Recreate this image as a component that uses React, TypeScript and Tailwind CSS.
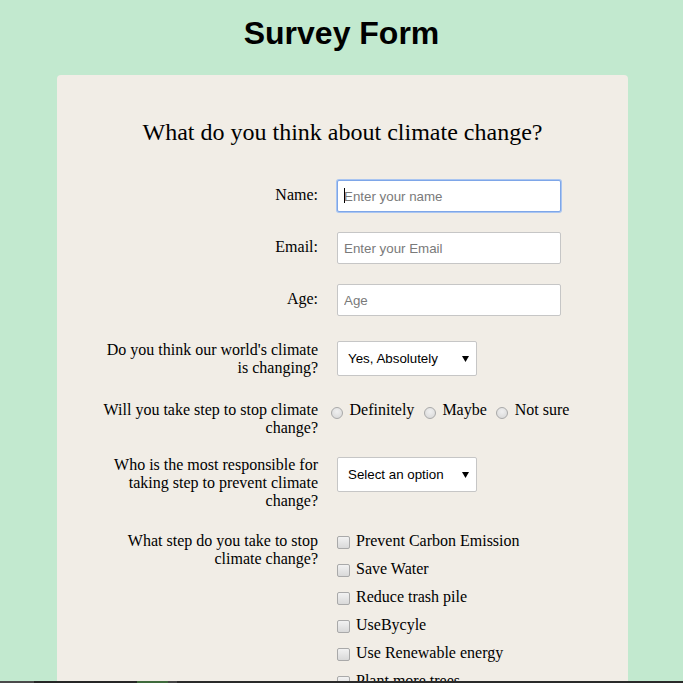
import React from "react";

const serif = { fontFamily: '"Liberation Serif", "Times New Roman", serif' };
const sans = { fontFamily: '"Liberation Sans", Arial, sans-serif' };

function Label({ children, className = "" }: { children: React.ReactNode; className?: string }) {
  return (
    <div className={"w-[220px] shrink-0 text-right text-[16px] leading-[18px] text-black " + className} style={serif}>
      {children}
    </div>
  );
}

function TextInput({ placeholder, focused }: { placeholder: string; focused?: boolean }) {
  return (
    <div className="relative ml-[19px]">
      <input
        type="text"
        placeholder={placeholder}
        style={sans}
        className={
          "block h-[32px] w-[224px] rounded-[2px] bg-white px-[6px] text-[13.33px] text-black outline-none placeholder:text-[#7a7a7a] " +
          (focused
            ? "border border-[#7ea6e8] shadow-[0_0_0_1px_#a9c5f1]"
            : "border border-[#c6c6c6]")
        }
      />
      {focused && <span className="pointer-events-none absolute left-[7px] top-[8px] h-[15px] w-px bg-black" />}
    </div>
  );
}

function FakeSelect({ value }: { value: string }) {
  return (
    <div
      className="ml-[19px] flex h-[35px] w-[140px] items-center justify-between rounded-[2px] border border-[#c6c6c6] bg-white pl-[10px] pr-[7px] text-[13.33px] text-black"
      style={sans}
    >
      <span>{value}</span>
      <svg width="7" height="6" viewBox="0 0 7 6">
        <path d="M0 0 H7 L3.5 6 Z" fill="#000" />
      </svg>
    </div>
  );
}

function Radio({ label }: { label: string }) {
  return (
    <div className="flex items-start gap-[6.5px]">
      <span className="mt-[6px] block h-[12px] w-[12px] rounded-full border border-[#a9a9a9] bg-[radial-gradient(circle_at_50%_35%,#f0f0f0,#d6d6d6)]" />
      <span className="text-[16px] leading-[18px]" style={serif}>{label}</span>
    </div>
  );
}

function Check({ label }: { label: string }) {
  return (
    <div className="flex items-start gap-[6px]">
      <span className="mt-[4px] block h-[13px] w-[13px] rounded-[2px] border border-[#a9a9a9] bg-[linear-gradient(#f2f2f2,#d9d9d9)]" />
      <span className="text-[16px] leading-[18px]" style={serif}>{label}</span>
    </div>
  );
}

export default function App() {
  return (
    <div className="min-h-screen bg-[#c2e9cf] pb-[40px]">
      <h1 className="pt-[15px] text-center text-[32px] font-bold leading-[37px] text-black" style={sans}>
        Survey Form
      </h1>
      <div className="ml-[57px] mt-[23px] w-[571px] rounded-[4px] bg-[#f1ede6] pt-[43px] pb-[60px]">
        <h2 className="text-center text-[24px] leading-[28px] text-black" style={serif}>
          What do you think about climate change?
        </h2>
        <form className="flex flex-col pl-[41px]">
          <div className="mt-[34px] flex items-start">
            <Label className="pt-[6px]">Name:</Label>
            <TextInput placeholder="Enter your name" focused />
          </div>
          <div className="mt-[20px] flex items-start">
            <Label className="pt-[6px]">Email:</Label>
            <TextInput placeholder="Enter your Email" />
          </div>
          <div className="mt-[20px] flex items-start">
            <Label className="pt-[6px]">Age:</Label>
            <TextInput placeholder="Age" />
          </div>
          <div className="mt-[25px] flex items-start">
            <Label>Do you think our world's climate is changing?</Label>
            <FakeSelect value="Yes, Absolutely" />
          </div>
          <div className="mt-[24px] flex items-start">
            <Label>Will you take step to stop climate change?</Label>
            <div className="ml-[13px] flex items-start gap-[9.5px] text-black">
              <Radio label="Definitely" />
              <Radio label="Maybe" />
              <Radio label="Not sure" />
            </div>
          </div>
          <div className="mt-[19px] flex items-start">
            <Label>Who is the most responsible for taking step to prevent climate change?</Label>
            <div className="pt-[1px]">
              <FakeSelect value="Select an option" />
            </div>
          </div>
          <div className="mt-[22px] flex items-start">
            <Label>What step do you take to stop climate change?</Label>
            <div className="ml-[19px] flex flex-col gap-[10px] text-black">
              <Check label="Prevent Carbon Emission" />
              <Check label="Save Water" />
              <Check label="Reduce trash pile" />
              <Check label="UseBycyle" />
              <Check label="Use Renewable energy" />
              <Check label="Plant more trees" />
            </div>
          </div>
        </form>
      </div>
      <div className="fixed bottom-0 left-0 right-0 flex h-[2px] bg-[#2a2a2a]">
        <div className="w-[34px] bg-[#4a4a4a]" />
        <div className="w-[103px] bg-[#262626]" />
        <div className="w-[31px] bg-[#3f6a3c]" />
        <div className="w-[9px] bg-[#454545]" />
      </div>
    </div>
  );
}
